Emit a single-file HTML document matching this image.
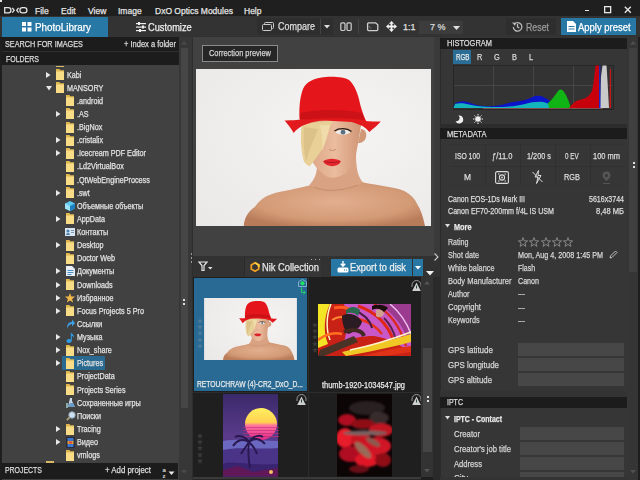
<!DOCTYPE html>
<html><head><meta charset="utf-8">
<style>
*{margin:0;padding:0;box-sizing:border-box}
html,body{width:640px;height:480px;overflow:hidden;background:#1e1e1e;font-family:"Liberation Sans",sans-serif;color:#dcdcdc;font-size:8px}
.a{position:absolute}
.t{position:absolute;white-space:nowrap;line-height:1;transform-origin:0 0;-webkit-text-stroke:0.25px currentColor}
svg{position:absolute;overflow:visible}
</style></head><body>
<div class="a" style="left:0px;top:0px;width:640px;height:16px;background:#1f1f1f;"></div>
<svg style="left:4px;top:6.5px" width="24" height="7" viewBox="0 0 24 7"><g fill="none" stroke="#e6e6e6" stroke-width="1.25"><path d="M0.7 0.7H4.4A2.55 2.55 0 0 1 4.4 5.8H0.7Z"/><path d="M8.3 0.9L10.2 3.25L8.3 5.6M14.6 0.9L12.7 3.25L14.6 5.6"/><rect x="15.9" y="0.7" width="7" height="5.1" rx="2.55"/></g></svg>
<div class="a" style="left:0px;top:0px;width:1.5px;height:1.5px;background:#e0e0e0;"></div>
<div class="t" style="left:35px;top:6.5px;font-size:8.5px;color:#e4e4e4;">File</div>
<div class="t" style="left:61px;top:6.5px;font-size:8.5px;color:#e4e4e4;">Edit</div>
<div class="t" style="left:88px;top:6.5px;font-size:8.5px;color:#e4e4e4;">View</div>
<div class="t" style="left:118px;top:6.5px;font-size:8.5px;color:#e4e4e4;">Image</div>
<div class="t" style="left:155px;top:6.5px;font-size:8.5px;color:#e4e4e4;">DxO Optics Modules</div>
<div class="t" style="left:244px;top:6.5px;font-size:8.5px;color:#e4e4e4;">Help</div>
<div class="a" style="left:585px;top:9.5px;width:4px;height:1.5px;background:#e8e8e8;"></div>
<svg style="left:603.5px;top:5.5px" width="8" height="8"><rect x="0.65" y="0.65" width="6" height="6" fill="none" stroke="#e8e8e8" stroke-width="1.3"/></svg>
<svg style="left:623.5px;top:5.5px" width="8" height="8"><path d="M0.8 0.8L6.8 6.8M6.8 0.8L0.8 6.8" stroke="#e8e8e8" stroke-width="1.3"/></svg>
<div class="a" style="left:0px;top:16px;width:640px;height:21px;background:#333333;"></div>
<div class="a" style="left:2px;top:17px;width:106px;height:20px;background:#2878a5;"></div>
<svg style="left:22px;top:22px" width="10" height="10"><g fill="#fff"><rect x="0" y="0" width="4" height="4"/><rect x="5.5" y="0" width="4" height="4"/><rect x="0" y="5.5" width="4" height="4"/><rect x="5.5" y="5.5" width="4" height="4"/></g></svg>
<div class="t" style="left:35px;top:21.6px;font-size:10.6px;color:#ffffff;transform:scaleX(0.932);">PhotoLibrary</div>
<svg style="left:136px;top:22px" width="10" height="10"><g fill="#eee"><rect x="0" y="1" width="10" height="1.2"/><rect x="0" y="4.5" width="10" height="1.2"/><rect x="0" y="8" width="10" height="1.2"/><rect x="2" y="0" width="2" height="3"/><rect x="6" y="3.5" width="2" height="3"/><rect x="3" y="7" width="2" height="3"/></g></svg>
<div class="t" style="left:147.5px;top:21.6px;font-size:10.6px;color:#f0f0f0;transform:scaleX(0.873);">Customize</div>
<div class="a" style="left:257px;top:18px;width:76px;height:17px;background:#2e2e2e;"></div>
<div class="a" style="left:320px;top:19px;width:1px;height:15px;background:#444;"></div>
<svg style="left:262px;top:22px" width="12" height="9"><g fill="none" stroke="#ccc" stroke-width="1"><rect x="2.5" y="0.5" width="9" height="6" rx="1"/><rect x="0.5" y="2.5" width="9" height="6" rx="1" fill="#2e2e2e"/></g></svg>
<div class="t" style="left:277.5px;top:22.2px;font-size:10.4px;color:#dedede;transform:scaleX(0.865);">Compare</div>
<svg style="left:324px;top:25px" width="6" height="4"><path d="M0 0h6l-3 3.5z" fill="#ddd"/></svg>
<svg style="left:340px;top:22px" width="13" height="10"><g fill="none" stroke="#cfcfcf" stroke-width="1.2"><rect x="0.8" y="0.9" width="4.2" height="7.6" rx="1.2"/><rect x="7" y="0.9" width="4.2" height="7.6" rx="1.2"/></g></svg>
<div class="a" style="left:358px;top:19px;width:1px;height:15px;background:#444;"></div>
<svg style="left:367px;top:22px" width="12" height="10"><g fill="none" stroke="#cfcfcf" stroke-width="1.3"><path d="M1.6 0.8h7l2.2 2v4.8a1 1 0 0 1-1 1h-8.2a1 1 0 0 1-1-1v-5.8a1 1 0 0 1 1-1z"/></g><path d="M2 4l2 2.5" stroke="#888" stroke-width="0.8"/></svg>
<svg style="left:386px;top:21px" width="11" height="11"><g fill="#f2f2f2"><path d="M5.5 0l2.6 2.7h-1.7v1.9h1.9v-1.7l2.7 2.6-2.7 2.6v-1.7h-1.9v1.9h1.7l-2.6 2.7-2.6-2.7h1.7v-1.9h-1.9v1.7l-2.7-2.6 2.7-2.6v1.7h1.9v-1.9h-1.7z"/></g></svg>
<div class="t" style="left:403px;top:23px;font-size:9px;color:#e0e0e0;">1:1</div>
<div class="a" style="left:419px;top:21px;width:44px;height:13px;background:#3c3c3c;"></div>
<div class="t" style="left:430px;top:23px;font-size:9px;color:#d8d8d8;">7 %</div>
<svg style="left:453px;top:26px" width="7" height="4"><path d="M0 0h7l-3.5 4z" fill="#e0e0e0"/></svg>
<div class="a" style="left:506px;top:18px;width:50px;height:17px;background:#2e2e2e;"></div>
<svg style="left:512px;top:21px" width="11" height="11"><g fill="none" stroke="#bbb" stroke-width="1.3"><path d="M2.2 3.2A4.3 4.3 0 1 1 1.3 6"/><path d="M5.5 3v2.8l1.8 1.2"/></g><path d="M0 1.5l3.8 0.2-0.8 3.4z" fill="#bbb"/></svg>
<div class="t" style="left:526px;top:22.8px;font-size:10px;color:#9a9a9a;transform:scaleX(0.88);">Reset</div>
<div class="a" style="left:561px;top:18px;width:75px;height:17px;background:#2878a5;"></div>
<svg style="left:567px;top:21px" width="9" height="11"><path d="M0 0h6l3 3v8h-9z" fill="#fff"/><g fill="#2878a5"><rect x="1.5" y="5" width="6" height="1"/><rect x="1.5" y="7.5" width="6" height="1"/></g></svg>
<div class="t" style="left:578px;top:22.8px;font-size:10px;color:#ffffff;transform:scaleX(0.946);">Apply preset</div>
<div class="a" style="left:0px;top:37px;width:2px;height:443px;background:#1e1e1e;"></div>
<div class="a" style="left:2px;top:37px;width:177px;height:443px;background:#414141;"></div>
<div class="a" style="left:2px;top:37px;width:177px;height:13.5px;background:#1c1c1c;"></div>
<div class="a" style="left:2px;top:50.5px;width:177px;height:1.5px;background:#2e2e2e;"></div>
<div class="a" style="left:2px;top:52px;width:177px;height:13px;background:#1c1c1c;"></div>
<div class="t" style="left:5px;top:40.3px;font-size:8.7px;color:#dcdcdc;transform:scaleX(0.836);">SEARCH FOR IMAGES</div>
<div class="t" style="left:124px;top:40.3px;font-size:8.7px;color:#dcdcdc;transform:scaleX(0.864);">+ Index a folder</div>
<div class="t" style="left:5.5px;top:54.8px;font-size:8.7px;color:#dcdcdc;transform:scaleX(0.803);">FOLDERS</div>
<div class="a" style="left:2px;top:65px;width:177px;height:398px;overflow:hidden">
<div class="a" style="left:54px;top:0.5px;width:8px;height:1.5px;background:#d8b860"></div>
<svg style="left:44px;top:6.50px" width="5" height="6"><path d="M0 0L4.5 3L0 6z" fill="#e8e8e8"/></svg>
<svg style="left:54px;top:4.00px" width="9" height="11" viewBox="0 0 9 11"><path d="M0 0h3.5l0.8 1.2h3.7v9.8h-8z" fill="#e0b850"/><path d="M0 2.4h7.6l0.4 0.5v8.1h-8z" fill="#f8dc86"/></svg>
<div class="t" style="left:64.5px;top:5.5px;font-size:8.7px;color:#e2e2e2;transform:scaleX(0.83);">Kabi</div>
<svg style="left:43.5px;top:20.63px" width="6" height="5"><path d="M0 0H6L3 4.5z" fill="#e8e8e8"/></svg>
<svg style="left:54px;top:17.13px" width="9" height="11" viewBox="0 0 9 11"><path d="M0 0h3.5l0.8 1.2h3.7v9.8h-8z" fill="#e0b850"/><path d="M0 2.4h7.6l0.4 0.5v8.1h-8z" fill="#f8dc86"/></svg>
<div class="t" style="left:64.5px;top:18.629999999999995px;font-size:8.7px;color:#e2e2e2;transform:scaleX(0.83);">MANSORY</div>
<svg style="left:63.5px;top:30.26px" width="9" height="11" viewBox="0 0 9 11"><path d="M0 0h3.5l0.8 1.2h3.7v9.8h-8z" fill="#e0b850"/><path d="M0 2.4h7.6l0.4 0.5v8.1h-8z" fill="#f8dc86"/></svg>
<div class="t" style="left:75px;top:31.760000000000005px;font-size:8.7px;color:#e2e2e2;transform:scaleX(0.83);">.android</div>
<svg style="left:54px;top:45.89px" width="5" height="6"><path d="M0 0L4.5 3L0 6z" fill="#e8e8e8"/></svg>
<svg style="left:63.5px;top:43.39px" width="9" height="11" viewBox="0 0 9 11"><path d="M0 0h3.5l0.8 1.2h3.7v9.8h-8z" fill="#e0b850"/><path d="M0 2.4h7.6l0.4 0.5v8.1h-8z" fill="#f8dc86"/></svg>
<div class="t" style="left:75px;top:44.89px;font-size:8.7px;color:#e2e2e2;transform:scaleX(0.83);">.AS</div>
<svg style="left:63.5px;top:56.52px" width="9" height="11" viewBox="0 0 9 11"><path d="M0 0h3.5l0.8 1.2h3.7v9.8h-8z" fill="#e0b850"/><path d="M0 2.4h7.6l0.4 0.5v8.1h-8z" fill="#f8dc86"/></svg>
<div class="t" style="left:75px;top:58.02000000000001px;font-size:8.7px;color:#e2e2e2;transform:scaleX(0.83);">.BigNox</div>
<svg style="left:54px;top:72.15px" width="5" height="6"><path d="M0 0L4.5 3L0 6z" fill="#e8e8e8"/></svg>
<svg style="left:63.5px;top:69.65px" width="9" height="11" viewBox="0 0 9 11"><path d="M0 0h3.5l0.8 1.2h3.7v9.8h-8z" fill="#e0b850"/><path d="M0 2.4h7.6l0.4 0.5v8.1h-8z" fill="#f8dc86"/></svg>
<div class="t" style="left:75px;top:71.15px;font-size:8.7px;color:#e2e2e2;transform:scaleX(0.83);">.cristalix</div>
<svg style="left:54px;top:85.28px" width="5" height="6"><path d="M0 0L4.5 3L0 6z" fill="#e8e8e8"/></svg>
<svg style="left:63.5px;top:82.78px" width="9" height="11" viewBox="0 0 9 11"><path d="M0 0h3.5l0.8 1.2h3.7v9.8h-8z" fill="#e0b850"/><path d="M0 2.4h7.6l0.4 0.5v8.1h-8z" fill="#f8dc86"/></svg>
<div class="t" style="left:75px;top:84.28px;font-size:8.7px;color:#e2e2e2;transform:scaleX(0.83);">.Icecream PDF Editor</div>
<svg style="left:63.5px;top:95.91px" width="9" height="11" viewBox="0 0 9 11"><path d="M0 0h3.5l0.8 1.2h3.7v9.8h-8z" fill="#e0b850"/><path d="M0 2.4h7.6l0.4 0.5v8.1h-8z" fill="#f8dc86"/></svg>
<div class="t" style="left:75px;top:97.41000000000003px;font-size:8.7px;color:#e2e2e2;transform:scaleX(0.83);">.Ld2VirtualBox</div>
<svg style="left:63.5px;top:109.04px" width="9" height="11" viewBox="0 0 9 11"><path d="M0 0h3.5l0.8 1.2h3.7v9.8h-8z" fill="#e0b850"/><path d="M0 2.4h7.6l0.4 0.5v8.1h-8z" fill="#f8dc86"/></svg>
<div class="t" style="left:75px;top:110.54000000000002px;font-size:8.7px;color:#e2e2e2;transform:scaleX(0.83);">.QtWebEngineProcess</div>
<svg style="left:54px;top:124.67px" width="5" height="6"><path d="M0 0L4.5 3L0 6z" fill="#e8e8e8"/></svg>
<svg style="left:63.5px;top:122.17px" width="9" height="11" viewBox="0 0 9 11"><path d="M0 0h3.5l0.8 1.2h3.7v9.8h-8z" fill="#e0b850"/><path d="M0 2.4h7.6l0.4 0.5v8.1h-8z" fill="#f8dc86"/></svg>
<div class="t" style="left:75px;top:123.67000000000002px;font-size:8.7px;color:#e2e2e2;transform:scaleX(0.83);">.swt</div>
<svg style="left:62.5px;top:135.80px" width="10" height="10" viewBox="0 0 10 10"><path d="M5 0L10 2.5V7.5L5 10L0 7.5V2.5z" fill="#5cc8f0"/><path d="M5 5L10 2.5V7.5L5 10z" fill="#1e7fc0"/><path d="M5 5L0 2.5V7.5L5 10z" fill="#9fe3fa"/></svg>
<div class="t" style="left:75px;top:136.8px;font-size:8.7px;color:#e2e2e2;transform:scaleX(0.83);">Объемные объекты</div>
<svg style="left:54px;top:150.93px" width="5" height="6"><path d="M0 0L4.5 3L0 6z" fill="#e8e8e8"/></svg>
<svg style="left:63.5px;top:148.43px" width="9" height="11" viewBox="0 0 9 11"><path d="M0 0h3.5l0.8 1.2h3.7v9.8h-8z" fill="#e0b850"/><path d="M0 2.4h7.6l0.4 0.5v8.1h-8z" fill="#f8dc86"/></svg>
<div class="t" style="left:75px;top:149.93px;font-size:8.7px;color:#e2e2e2;transform:scaleX(0.83);">AppData</div>
<svg style="left:62.5px;top:163.06px" width="10" height="8" viewBox="0 0 10 8"><rect x="0" y="0" width="10" height="8" fill="#d7e6f2"/><circle cx="3" cy="3" r="1.5" fill="#4a7fb0"/><path d="M1 7a2 2 0 0 1 4 0z" fill="#4a7fb0"/><rect x="6" y="2" width="3" height="1" fill="#7a9ab8"/><rect x="6" y="4" width="3" height="1" fill="#7a9ab8"/></svg>
<div class="t" style="left:75px;top:163.06px;font-size:8.7px;color:#e2e2e2;transform:scaleX(0.83);">Контакты</div>
<svg style="left:54px;top:177.19px" width="5" height="6"><path d="M0 0L4.5 3L0 6z" fill="#e8e8e8"/></svg>
<svg style="left:63.5px;top:174.69px" width="9" height="11" viewBox="0 0 9 11"><path d="M0 0h3.5l0.8 1.2h3.7v9.8h-8z" fill="#e0b850"/><path d="M0 2.4h7.6l0.4 0.5v8.1h-8z" fill="#f8dc86"/></svg>
<div class="t" style="left:75px;top:176.19px;font-size:8.7px;color:#e2e2e2;transform:scaleX(0.83);">Desktop</div>
<svg style="left:63.5px;top:187.82px" width="9" height="11" viewBox="0 0 9 11"><path d="M0 0h3.5l0.8 1.2h3.7v9.8h-8z" fill="#e0b850"/><path d="M0 2.4h7.6l0.4 0.5v8.1h-8z" fill="#f8dc86"/></svg>
<div class="t" style="left:75px;top:189.32000000000005px;font-size:8.7px;color:#e2e2e2;transform:scaleX(0.83);">Doctor Web</div>
<svg style="left:54px;top:203.45px" width="5" height="6"><path d="M0 0L4.5 3L0 6z" fill="#e8e8e8"/></svg>
<svg style="left:63.5px;top:201.45px" width="9" height="10" viewBox="0 0 9 10"><path d="M0 0h6l3 3v7h-9z" fill="#e8eef5"/><rect x="1.5" y="4" width="6" height="1" fill="#4a90c8"/><rect x="1.5" y="6" width="6" height="1" fill="#4a90c8"/><rect x="1.5" y="8" width="4" height="1" fill="#4a90c8"/></svg>
<div class="t" style="left:75px;top:202.45000000000005px;font-size:8.7px;color:#e2e2e2;transform:scaleX(0.83);">Документы</div>
<svg style="left:54px;top:216.58px" width="5" height="6"><path d="M0 0L4.5 3L0 6z" fill="#e8e8e8"/></svg>
<svg style="left:63.5px;top:214.08px" width="9" height="11" viewBox="0 0 9 11"><path d="M0 0h3.5l0.8 1.2h3.7v9.8h-8z" fill="#e0b850"/><path d="M0 2.4h7.6l0.4 0.5v8.1h-8z" fill="#f8dc86"/></svg>
<div class="t" style="left:75px;top:215.58000000000004px;font-size:8.7px;color:#e2e2e2;transform:scaleX(0.83);">Downloads</div>
<svg style="left:54px;top:229.71px" width="5" height="6"><path d="M0 0L4.5 3L0 6z" fill="#e8e8e8"/></svg>
<svg style="left:62.5px;top:227.71px" width="10" height="10" viewBox="0 0 10 10"><path d="M5 0L6.3 3.5L10 3.6L7.1 5.9L8.1 9.6L5 7.5L1.9 9.6L2.9 5.9L0 3.6L3.7 3.5z" fill="#f2b84a"/></svg>
<div class="t" style="left:75px;top:228.71000000000004px;font-size:8.7px;color:#e2e2e2;transform:scaleX(0.83);">Избранное</div>
<svg style="left:54px;top:242.84px" width="5" height="6"><path d="M0 0L4.5 3L0 6z" fill="#e8e8e8"/></svg>
<svg style="left:63.5px;top:240.34px" width="9" height="11" viewBox="0 0 9 11"><path d="M0 0h3.5l0.8 1.2h3.7v9.8h-8z" fill="#e0b850"/><path d="M0 2.4h7.6l0.4 0.5v8.1h-8z" fill="#f8dc86"/></svg>
<div class="t" style="left:75px;top:241.84000000000003px;font-size:8.7px;color:#e2e2e2;transform:scaleX(0.83);">Focus Projects 5 Pro</div>
<svg style="left:63.5px;top:253.97px" width="9" height="10" viewBox="0 0 9 10"><path d="M1 9.5C1 5 3 3 6 3V0.5L9 4L6 7.5V5C4 5 2.5 6.5 1 9.5z" fill="#3ea0e6"/></svg>
<div class="t" style="left:75px;top:254.97000000000003px;font-size:8.7px;color:#e2e2e2;transform:scaleX(0.83);">Ссылки</div>
<svg style="left:54px;top:269.10px" width="5" height="6"><path d="M0 0L4.5 3L0 6z" fill="#e8e8e8"/></svg>
<svg style="left:63.5px;top:266.60px" width="9" height="11" viewBox="0 0 9 11"><ellipse cx="3" cy="9" rx="2.6" ry="1.9" fill="#2e9be6"/><path d="M4.8 9V0.5C6 2 8.5 3 8 6C7.5 4.5 6.5 3.8 5.8 3.8V9z" fill="#2e9be6"/></svg>
<div class="t" style="left:75px;top:268.1px;font-size:8.7px;color:#e2e2e2;transform:scaleX(0.83);">Музыка</div>
<svg style="left:54px;top:282.23px" width="5" height="6"><path d="M0 0L4.5 3L0 6z" fill="#e8e8e8"/></svg>
<svg style="left:63.5px;top:279.73px" width="9" height="11" viewBox="0 0 9 11"><path d="M0 0h3.5l0.8 1.2h3.7v9.8h-8z" fill="#e0b850"/><path d="M0 2.4h7.6l0.4 0.5v8.1h-8z" fill="#f8dc86"/></svg>
<div class="t" style="left:75px;top:281.23px;font-size:8.7px;color:#e2e2e2;transform:scaleX(0.83);">Nox_share</div>
<div class="a" style="left:60px;top:291.36px;width:43px;height:13.5px;background:#2a6a90"></div>
<svg style="left:54px;top:295.36px" width="5" height="6"><path d="M0 0L4.5 3L0 6z" fill="#e8e8e8"/></svg>
<svg style="left:63.5px;top:292.86px" width="9" height="11" viewBox="0 0 9 11"><path d="M0 0h3.5l0.8 1.2h3.7v9.8h-8z" fill="#e0b850"/><path d="M0 2.4h7.6l0.4 0.5v8.1h-8z" fill="#f8dc86"/></svg>
<div class="t" style="left:75px;top:294.36px;font-size:8.7px;color:#e2e2e2;transform:scaleX(0.83);">Pictures</div>
<svg style="left:63.5px;top:305.99px" width="9" height="11" viewBox="0 0 9 11"><path d="M0 0h3.5l0.8 1.2h3.7v9.8h-8z" fill="#e0b850"/><path d="M0 2.4h7.6l0.4 0.5v8.1h-8z" fill="#f8dc86"/></svg>
<div class="t" style="left:75px;top:307.49px;font-size:8.7px;color:#e2e2e2;transform:scaleX(0.83);">ProjectData</div>
<svg style="left:63.5px;top:319.12px" width="9" height="11" viewBox="0 0 9 11"><path d="M0 0h3.5l0.8 1.2h3.7v9.8h-8z" fill="#e0b850"/><path d="M0 2.4h7.6l0.4 0.5v8.1h-8z" fill="#f8dc86"/></svg>
<div class="t" style="left:75px;top:320.62px;font-size:8.7px;color:#e2e2e2;transform:scaleX(0.83);">Projects Series</div>
<svg style="left:63.5px;top:332.75px" width="9" height="10" viewBox="0 0 9 10"><path d="M4 0h2v3l3 6h-7z" fill="#c7d6e6"/><path d="M2 9l2-4h3l2 4z" fill="#6a9ac8"/><rect x="0" y="5" width="2" height="5" fill="#8aa"/></svg>
<div class="t" style="left:75px;top:333.75px;font-size:8.7px;color:#e2e2e2;transform:scaleX(0.83);">Сохраненные игры</div>
<svg style="left:63.5px;top:345.88px" width="10" height="10" viewBox="0 0 10 10"><circle cx="6" cy="4" r="3.2" fill="#cfe0ee" stroke="#8fa9bd" stroke-width="1"/><path d="M3.8 6.2L0.8 9.2" stroke="#b0a080" stroke-width="1.8"/></svg>
<div class="t" style="left:75px;top:346.88px;font-size:8.7px;color:#e2e2e2;transform:scaleX(0.83);">Поиски</div>
<svg style="left:54px;top:361.01px" width="5" height="6"><path d="M0 0L4.5 3L0 6z" fill="#e8e8e8"/></svg>
<svg style="left:63.5px;top:358.51px" width="9" height="11" viewBox="0 0 9 11"><path d="M0 0h3.5l0.8 1.2h3.7v9.8h-8z" fill="#e0b850"/><path d="M0 2.4h7.6l0.4 0.5v8.1h-8z" fill="#f8dc86"/></svg>
<div class="t" style="left:75px;top:360.01000000000005px;font-size:8.7px;color:#e2e2e2;transform:scaleX(0.83);">Tracing</div>
<svg style="left:54px;top:374.14px" width="5" height="6"><path d="M0 0L4.5 3L0 6z" fill="#e8e8e8"/></svg>
<svg style="left:63.5px;top:371.64px" width="9" height="11" viewBox="0 0 9 11"><rect x="0" y="0" width="9" height="11" fill="#2a2a3a"/><rect x="1.5" y="1" width="6" height="3" fill="#3a78d0"/><rect x="1.5" y="4" width="6" height="3" fill="#e2a030"/><rect x="1.5" y="7" width="6" height="3" fill="#3a78d0"/><rect x="3" y="4.5" width="3" height="2" fill="#e04040"/></svg>
<div class="t" style="left:75px;top:373.14000000000004px;font-size:8.7px;color:#e2e2e2;transform:scaleX(0.83);">Видео</div>
<svg style="left:63.5px;top:384.77px" width="9" height="11" viewBox="0 0 9 11"><path d="M0 0h3.5l0.8 1.2h3.7v9.8h-8z" fill="#e0b850"/><path d="M0 2.4h7.6l0.4 0.5v8.1h-8z" fill="#f8dc86"/></svg>
<div class="t" style="left:75px;top:386.27000000000004px;font-size:8.7px;color:#e2e2e2;transform:scaleX(0.83);">vmlogs</div>
</div>
<div class="a" style="left:2px;top:463px;width:176px;height:16px;background:#1c1c1c;"></div>
<div class="t" style="left:5px;top:466px;font-size:8.7px;color:#dcdcdc;transform:scaleX(0.797);">PROJECTS</div>
<div class="t" style="left:105px;top:466px;font-size:8.7px;color:#dcdcdc;transform:scaleX(0.902);">+ Add project</div>
<svg style="left:162px;top:465.5px" width="14" height="13"><text x="0.5" y="5.5" font-size="6" font-weight="bold" fill="#ddd" font-family="Liberation Sans">a</text><text x="0.5" y="11.5" font-size="6" font-weight="bold" fill="#ddd" font-family="Liberation Sans">z</text><path d="M6.5 5.5h6l-3 3.5z" fill="#e8e8e8"/></svg>
<div class="a" style="left:46px;top:461px;width:8px;height:2px;background:#d8b860;"></div>
<div class="a" style="left:179px;top:37px;width:14px;height:443px;background:#373737;"></div>
<div class="a" style="left:180.5px;top:48px;width:7px;height:360px;background:#464646;"></div>
<svg style="left:181px;top:41px" width="6" height="4"><path d="M0 3.5L3 0L6 3.5z" fill="#4a4a4a"/></svg>
<svg style="left:181px;top:470px" width="6" height="4"><path d="M0 0L3 3.5L6 0z" fill="#4a4a4a"/></svg>
<div class="a" style="left:192px;top:37px;width:1px;height:443px;background:#2e2e2e;"></div>
<div class="a" style="left:193px;top:37px;width:247px;height:219px;background:#414141;"></div>
<div class="a" style="left:193px;top:35.5px;width:247px;height:1.5px;background:#303030;"></div>
<div class="a" style="left:433.5px;top:37px;width:6.5px;height:220px;background:#3a3a3a;"></div>
<div class="a" style="left:202px;top:45px;width:76px;height:17px;background:#262626;border:1px solid #8a8a8a"></div>
<div class="t" style="left:209px;top:49.3px;font-size:8.8px;color:#d4d4d4;transform:scaleX(0.845);">Correction preview</div>
<svg style="left:196px;top:69px" width="235" height="157" viewBox="0 0 235 157">
<defs>
<radialGradient id="bg" cx="0.62" cy="0.4" r="0.8"><stop offset="0" stop-color="#f6f3f3"/><stop offset="1" stop-color="#ebe8e8"/></radialGradient>
<radialGradient id="skin" cx="0.5" cy="0.45" r="0.6"><stop offset="0" stop-color="#e2ae8e"/><stop offset="0.7" stop-color="#d39a76"/><stop offset="1" stop-color="#b97c5a"/></radialGradient>
<linearGradient id="face" x1="0" y1="0" x2="1" y2="0"><stop offset="0" stop-color="#d8a080"/><stop offset="0.55" stop-color="#ebbc9e"/><stop offset="1" stop-color="#cf9474"/></linearGradient>
</defs>
<rect width="235" height="157" fill="url(#bg)"/>
<path d="M47.8 157 C48 150 52 142 58.75 137.9 C63 132 67 129 71 127 C76 125 82 123 86.9 122.3 C98 120 108 118 115 116 L140 120 L165 112.9 C175 115 183 116 190 117.6 C198 119 204 120 208.75 122.3 C215 126 219 130 221 134.75 C225 141 227 148 229 157 Z" fill="url(#skin)"/>
<path d="M121 96 C121 104 119 110 113 116.5 C122 120 132 123 140 123 C148 122 158 118 167 113.5 C162 108 160 100 160 84 L150 90 Z" fill="#d9a282"/>
<path d="M118 118 C126 121 134 122 140 121 C146 121 154 119 162 116" stroke="#c08868" stroke-width="0.8" fill="none"/>
<path d="M106 50 C108 72 112 88 120 98 C126 105 131 108.7 136.7 108.7 C142 108.7 147 106 150.5 104 C155 98 158 92 159.6 88 C161 80 163 70 166 50 Z" fill="url(#face)"/>
<path d="M165 60 C169 60 171 64 170 68 C169 72 166 74 162 74 Z" fill="#d09876"/>
<path d="M127 92.3 C131 88.8 141 88.8 145 92.3 C142 98.8 130.5 98.8 127 92.3 Z" fill="#e3262e"/>
<path d="M128.5 92.6 C133 93.8 140 93.8 143.7 92.6" stroke="#9a1018" stroke-width="0.7" fill="none"/>
<path d="M139.5 63 C143 60 151 60 154.5 63 C151 66.5 143 66.5 139.5 63Z" fill="#eef0f0"/><circle cx="147" cy="63.2" r="2.4" fill="#5a7080"/>
<path d="M138.5 62 C143 58.8 151 58.8 155.5 62.5" stroke="#2a1c18" stroke-width="1.4" fill="none"/>
<path d="M133 80 C135 82 138 82 140 80" stroke="#b8805e" stroke-width="0.8" fill="none"/>
<path d="M105.8 55 C104 68 105 82 108 92.7 C110 95 112 97 113.8 97.2 C118 92 121 88 124 83.5 C127 79 128.7 75 129.8 69.7 C132 64 134 58 136.7 51.4 Z" fill="#e8d096"/>
<path d="M108 58 C107 72 108 84 110 92 C113 82 117 72 122 60Z" fill="#dcc288"/>
<path d="M124 56 C126 66 127 74 126 82 C129 74 132 66 134 56Z" fill="#f0dcaa"/>
<path d="M103.5 50.3 C103 38 104 28 107 20 C110 13 118 8.5 129.8 7.9 C140 7.3 149 8.5 153 11 C158 15 162 24 164.2 35.4 C166 42 168 48 171 53.7 Z" fill="#e5161b"/>
<path d="M88.6 51.4 C94 51.5 100 51 107 50.5 C120 48.5 130 47.5 137 47.5 C150 48 160 50 168 52 C175 52.5 180 52.5 184.8 52.6 C181 57 177 60 173.4 62.9 C171 60 168 58 166.5 57 C156 52 146 50 137 50.5 C125 51 114 53 105.8 57.1 C103 59 100 61 97.7 64 C95 59 91.5 55 88.6 51.4 Z" fill="#e31a1d"/>
<path d="M104.5 44 C120 40 150 40 166 44 L169 51 C150 48.5 125 48.5 104 51 Z" fill="#cc1216"/>
</svg>
<div class="a" style="left:193px;top:256px;width:247px;height:21px;background:#323232;"></div>
<div class="a" style="left:244px;top:257px;width:1px;height:19px;background:#2a2a2a;"></div>
<div class="a" style="left:190.5px;top:253px;width:1.5px;height:1.5px;background:#9a9a9a;"></div>
<div class="a" style="left:190.5px;top:257px;width:1.5px;height:1.5px;background:#9a9a9a;"></div>
<div class="a" style="left:190.5px;top:261px;width:1.5px;height:1.5px;background:#9a9a9a;"></div>
<svg style="left:199px;top:262px" width="14" height="9"><path d="M0 0H8L5 3.5V8.5H3V3.5z" fill="none" stroke="#e6e6e6" stroke-width="1.2"/><path d="M9 5h4.5l-2.25 2.5z" fill="#e6e6e6"/></svg>
<div class="a" style="left:245px;top:258px;width:76px;height:19px;background:#363636;"></div>
<svg style="left:250px;top:262px" width="10" height="10" viewBox="0 0 10 10"><path d="M5 0.8L8.7 2.9V7.1L5 9.2L1.3 7.1V2.9Z" fill="none" stroke="#f0a020" stroke-width="1.8"/><path d="M5 0.8L8.7 2.9V5" fill="none" stroke="#ffd040" stroke-width="1.8"/></svg>
<div class="t" style="left:262px;top:262.8px;font-size:10.4px;color:#e6e6e6;transform:scaleX(0.897);">Nik Collection</div>
<div class="a" style="left:310.5px;top:259px;width:1.3px;height:1.3px;background:#aaa;"></div>
<div class="a" style="left:314.5px;top:259px;width:1.3px;height:1.3px;background:#aaa;"></div>
<div class="a" style="left:318.5px;top:259px;width:1.3px;height:1.3px;background:#aaa;"></div>
<div class="a" style="left:330.5px;top:258.5px;width:81px;height:17.5px;background:#2878a5;"></div>
<div class="a" style="left:412.5px;top:258.5px;width:10.5px;height:17.5px;background:#2878a5;"></div>
<svg style="left:337px;top:261px" width="12" height="12" viewBox="0 0 12 12"><path d="M6 0v5M3.8 2.8L6 5.2L8.2 2.8" stroke="#fff" stroke-width="1.4" fill="none"/><rect x="0.5" y="6.5" width="11" height="5" rx="1.5" fill="#fff"/><rect x="7" y="8.5" width="1" height="1" fill="#2878a5"/><rect x="9" y="8.5" width="1" height="1" fill="#2878a5"/></svg>
<div class="t" style="left:350px;top:263.2px;font-size:10.4px;color:#f0f0f0;transform:scaleX(0.889);">Export to disk</div>
<svg style="left:414.5px;top:266px" width="6" height="4"><path d="M0 0h6l-3 3.5z" fill="#fff"/></svg>
<svg style="left:426px;top:271px" width="8" height="5"><path d="M0 0h8l-4 4.5z" fill="#f0f0f0"/></svg>
<svg style="left:434px;top:253px" width="5" height="8"><path d="M0.5 0.5L4 4L0.5 7.5" stroke="#ccc" stroke-width="1.1" fill="none"/></svg>
<div class="a" style="left:193px;top:277px;width:228px;height:203px;background:#1f1f1f;"></div>
<div class="a" style="left:307.5px;top:277px;width:1px;height:203px;background:#2c2c2c;"></div>
<div class="a" style="left:193px;top:391.5px;width:228px;height:1px;background:#2c2c2c;"></div>
<div class="a" style="left:194px;top:278px;width:113px;height:113px;background:#286a93;"></div>
<svg style="left:204px;top:298px" width="93" height="62" viewBox="0 0 235 157">
<defs>
<radialGradient id="bg2" cx="0.62" cy="0.4" r="0.8"><stop offset="0" stop-color="#f6f3f3"/><stop offset="1" stop-color="#ebe8e8"/></radialGradient>
<radialGradient id="skin2" cx="0.5" cy="0.45" r="0.6"><stop offset="0" stop-color="#e2ae8e"/><stop offset="0.7" stop-color="#d39a76"/><stop offset="1" stop-color="#b97c5a"/></radialGradient>
<linearGradient id="face" x1="0" y1="0" x2="1" y2="0"><stop offset="0" stop-color="#d8a080"/><stop offset="0.55" stop-color="#ebbc9e"/><stop offset="1" stop-color="#cf9474"/></linearGradient>
</defs>
<rect width="235" height="157" fill="url(#bg2)"/>
<path d="M47.8 157 C48 150 52 142 58.75 137.9 C63 132 67 129 71 127 C76 125 82 123 86.9 122.3 C98 120 108 118 115 116 L140 120 L165 112.9 C175 115 183 116 190 117.6 C198 119 204 120 208.75 122.3 C215 126 219 130 221 134.75 C225 141 227 148 229 157 Z" fill="url(#skin2)"/>
<path d="M121 96 C121 104 119 110 113 116.5 C122 120 132 123 140 123 C148 122 158 118 167 113.5 C162 108 160 100 160 84 L150 90 Z" fill="#d9a282"/>
<path d="M118 118 C126 121 134 122 140 121 C146 121 154 119 162 116" stroke="#c08868" stroke-width="0.8" fill="none"/>
<path d="M106 50 C108 72 112 88 120 98 C126 105 131 108.7 136.7 108.7 C142 108.7 147 106 150.5 104 C155 98 158 92 159.6 88 C161 80 163 70 166 50 Z" fill="url(#face)"/>
<path d="M165 60 C169 60 171 64 170 68 C169 72 166 74 162 74 Z" fill="#d09876"/>
<path d="M127 92.3 C131 88.8 141 88.8 145 92.3 C142 98.8 130.5 98.8 127 92.3 Z" fill="#e3262e"/>
<path d="M128.5 92.6 C133 93.8 140 93.8 143.7 92.6" stroke="#9a1018" stroke-width="0.7" fill="none"/>
<path d="M139.5 63 C143 60 151 60 154.5 63 C151 66.5 143 66.5 139.5 63Z" fill="#eef0f0"/><circle cx="147" cy="63.2" r="2.4" fill="#5a7080"/>
<path d="M138.5 62 C143 58.8 151 58.8 155.5 62.5" stroke="#2a1c18" stroke-width="1.4" fill="none"/>
<path d="M133 80 C135 82 138 82 140 80" stroke="#b8805e" stroke-width="0.8" fill="none"/>
<path d="M105.8 55 C104 68 105 82 108 92.7 C110 95 112 97 113.8 97.2 C118 92 121 88 124 83.5 C127 79 128.7 75 129.8 69.7 C132 64 134 58 136.7 51.4 Z" fill="#e8d096"/>
<path d="M108 58 C107 72 108 84 110 92 C113 82 117 72 122 60Z" fill="#dcc288"/>
<path d="M124 56 C126 66 127 74 126 82 C129 74 132 66 134 56Z" fill="#f0dcaa"/>
<path d="M103.5 50.3 C103 38 104 28 107 20 C110 13 118 8.5 129.8 7.9 C140 7.3 149 8.5 153 11 C158 15 162 24 164.2 35.4 C166 42 168 48 171 53.7 Z" fill="#e5161b"/>
<path d="M88.6 51.4 C94 51.5 100 51 107 50.5 C120 48.5 130 47.5 137 47.5 C150 48 160 50 168 52 C175 52.5 180 52.5 184.8 52.6 C181 57 177 60 173.4 62.9 C171 60 168 58 166.5 57 C156 52 146 50 137 50.5 C125 51 114 53 105.8 57.1 C103 59 100 61 97.7 64 C95 59 91.5 55 88.6 51.4 Z" fill="#e31a1d"/>
<path d="M104.5 44 C120 40 150 40 166 44 L169 51 C150 48.5 125 48.5 104 51 Z" fill="#cc1216"/>
</svg>
<svg style="left:196.5px;top:318.0px" width="6" height="6" viewBox="0 0 10 10"><path d="M5 0L6.3 3.5L10 3.6L7.1 5.9L8.1 9.6L5 7.5L1.9 9.6L2.9 5.9L0 3.6L3.7 3.5z" fill="#4a7a9a"/></svg>
<svg style="left:196.5px;top:324.2px" width="6" height="6" viewBox="0 0 10 10"><path d="M5 0L6.3 3.5L10 3.6L7.1 5.9L8.1 9.6L5 7.5L1.9 9.6L2.9 5.9L0 3.6L3.7 3.5z" fill="#4a7a9a"/></svg>
<svg style="left:196.5px;top:330.4px" width="6" height="6" viewBox="0 0 10 10"><path d="M5 0L6.3 3.5L10 3.6L7.1 5.9L8.1 9.6L5 7.5L1.9 9.6L2.9 5.9L0 3.6L3.7 3.5z" fill="#4a7a9a"/></svg>
<svg style="left:196.5px;top:336.6px" width="6" height="6" viewBox="0 0 10 10"><path d="M5 0L6.3 3.5L10 3.6L7.1 5.9L8.1 9.6L5 7.5L1.9 9.6L2.9 5.9L0 3.6L3.7 3.5z" fill="#4a7a9a"/></svg>
<svg style="left:196.5px;top:342.8px" width="6" height="6" viewBox="0 0 10 10"><path d="M5 0L6.3 3.5L10 3.6L7.1 5.9L8.1 9.6L5 7.5L1.9 9.6L2.9 5.9L0 3.6L3.7 3.5z" fill="#4a7a9a"/></svg>
<svg style="left:311.5px;top:322.0px" width="6" height="6" viewBox="0 0 10 10"><path d="M5 0L6.3 3.5L10 3.6L7.1 5.9L8.1 9.6L5 7.5L1.9 9.6L2.9 5.9L0 3.6L3.7 3.5z" fill="#3a3a3a"/></svg>
<svg style="left:311.5px;top:328.2px" width="6" height="6" viewBox="0 0 10 10"><path d="M5 0L6.3 3.5L10 3.6L7.1 5.9L8.1 9.6L5 7.5L1.9 9.6L2.9 5.9L0 3.6L3.7 3.5z" fill="#3a3a3a"/></svg>
<svg style="left:311.5px;top:334.4px" width="6" height="6" viewBox="0 0 10 10"><path d="M5 0L6.3 3.5L10 3.6L7.1 5.9L8.1 9.6L5 7.5L1.9 9.6L2.9 5.9L0 3.6L3.7 3.5z" fill="#3a3a3a"/></svg>
<svg style="left:311.5px;top:340.6px" width="6" height="6" viewBox="0 0 10 10"><path d="M5 0L6.3 3.5L10 3.6L7.1 5.9L8.1 9.6L5 7.5L1.9 9.6L2.9 5.9L0 3.6L3.7 3.5z" fill="#3a3a3a"/></svg>
<svg style="left:311.5px;top:346.8px" width="6" height="6" viewBox="0 0 10 10"><path d="M5 0L6.3 3.5L10 3.6L7.1 5.9L8.1 9.6L5 7.5L1.9 9.6L2.9 5.9L0 3.6L3.7 3.5z" fill="#3a3a3a"/></svg>
<div class="t" style="left:197px;top:379.8px;font-size:8.8px;color:#e8e8e8;transform:scaleX(0.766);">RETOUCHRAW (4)-CR2_DxO_D...</div>
<div class="t" style="left:322px;top:380.8px;font-size:8.8px;color:#e8e8e8;transform:scaleX(0.844);">thumb-1920-1034547.jpg</div>
<svg style="left:298px;top:279.3px" width="10" height="16" viewBox="0 0 10 16"><path d="M4.5 0.5L8.5 2.8V7.5H0.5V2.8Z" fill="none" stroke="#8ab8d0" stroke-width="0.9"/><circle cx="4.5" cy="4.2" r="2" fill="#20e860"/><path d="M3.5 8.5v5h3.5M5.5 11.8l1.8 1.7-1.8 1.7" stroke="#20d860" stroke-width="1" fill="none"/></svg>
<svg style="left:411px;top:279.5px" width="11" height="12" viewBox="0 0 11 12"><path d="M1 7V5A4.5 4.5 0 0 1 10 5V7" fill="none" stroke="#9a9a9a" stroke-width="1"/><path d="M5.5 2.5L9.8 11H1.2Z" fill="#cfcfcf"/><rect x="5" y="5.5" width="1" height="3" fill="#2a4a40"/></svg>
<svg style="left:296px;top:393.5px" width="11" height="12" viewBox="0 0 11 12"><path d="M1 7V5A4.5 4.5 0 0 1 10 5V7" fill="none" stroke="#9a9a9a" stroke-width="1"/><path d="M5.5 2.5L9.8 11H1.2Z" fill="#cfcfcf"/><rect x="5" y="5.5" width="1" height="3" fill="#2a4a40"/></svg>
<svg style="left:411px;top:393.5px" width="11" height="12" viewBox="0 0 11 12"><path d="M1 7V5A4.5 4.5 0 0 1 10 5V7" fill="none" stroke="#9a9a9a" stroke-width="1"/><path d="M5.5 2.5L9.8 11H1.2Z" fill="#cfcfcf"/><rect x="5" y="5.5" width="1" height="3" fill="#2a4a40"/></svg>
<svg style="left:318px;top:303.5px" width="93" height="52" viewBox="0 0 93 52">
<defs><filter id="ab" x="-0.1" y="-0.1" width="1.2" height="1.2"><feGaussianBlur stdDeviation="0.45"/></filter><clipPath id="ac"><rect width="93" height="52"/></clipPath></defs>
<g clip-path="url(#ac)"><g filter="url(#ab)">
<rect width="93" height="52" fill="#c82014"/>
<path d="M26 0H93V48C80 40 70 34 56 32C44 32 34 34 26 38C30 24 30 10 26 0z" fill="#c858c8"/>
<path d="M60 0C74 8 84 20 90 36L93 36V0z" fill="#9a3a90"/>
<path d="M40 2C58 8 70 20 76 38" stroke="#e02818" stroke-width="3" fill="none"/>
<path d="M56 0C72 8 82 22 88 42" stroke="#d82a20" stroke-width="2.5" fill="none"/>
<path d="M72 0C84 10 90 22 93 30" stroke="#f0c0f0" stroke-width="1.5" fill="none"/>
<path d="M30 14C44 14 56 20 64 30" stroke="#e83018" stroke-width="2.5" fill="none"/>
<path d="M36 6C46 10 52 16 54 24" stroke="#4a1a40" stroke-width="2" fill="none"/>
<path d="M66 14C72 20 76 28 78 36" stroke="#5a2050" stroke-width="2" fill="none"/>
<path d="M0 0H12C6 12 5 28 10 40L0 44z" fill="#f4e428"/>
<path d="M13 0C8 12 8 26 12 36" stroke="#fff8c0" stroke-width="1.5" fill="none"/>
<path d="M16 4C24 2 30 3 36 8" stroke="#ff5a20" stroke-width="3" fill="none"/>
<path d="M14 16C20 12 26 12 32 16" stroke="#ff8a30" stroke-width="2" fill="none"/>
<path d="M24 12C30 8 40 10 44 18C42 24 36 28 30 30C26 26 24 18 24 12z" fill="#2a1a20"/>
<path d="M28 6C32 2 38 2 42 6L40 12C36 8 32 8 28 10z" fill="#2a6a50"/>
<path d="M58 6C62 4 66 6 66 10C64 14 60 14 58 12z" fill="#d0a090"/>
<path d="M54 2C58 0 66 0 70 4L66 8C62 4 58 4 54 6z" fill="#1a0c10"/>
<path d="M26 28C34 24 44 26 46 32" stroke="#402a20" stroke-width="4" fill="none"/>
<path d="M2 46L36 32L40 38L6 52H0z" fill="#4a3028"/>
<path d="M24 48C40 44 60 40 93 30V38C70 44 50 48 28 52z" fill="#f0c828"/>
<path d="M32 46C52 42 72 36 93 28" stroke="#fff6d0" stroke-width="1.5" fill="none"/>
<path d="M44 52C60 48 76 44 93 42V48C80 50 70 52 60 52z" fill="#e03018"/>
<path d="M0 36C8 30 16 28 24 30" stroke="#ff7020" stroke-width="2.5" fill="none"/>
</g></g>
</svg>
<svg style="left:223px;top:394px" width="55" height="82.5" viewBox="0 0 55 82.5">
<defs><linearGradient id="sk" x1="0" y1="0" x2="0" y2="1"><stop offset="0" stop-color="#3a2a6a"/><stop offset="0.5" stop-color="#5a3a8a"/><stop offset="1" stop-color="#4a3a90"/></linearGradient>
<linearGradient id="sun" x1="0" y1="0" x2="0" y2="1"><stop offset="0" stop-color="#fff060"/><stop offset="0.45" stop-color="#ffd050"/><stop offset="0.55" stop-color="#ff70a0"/><stop offset="1" stop-color="#e02888"/></linearGradient></defs>
<rect width="55" height="82.5" fill="url(#sk)"/>
<circle cx="38" cy="30" r="16" fill="url(#sun)"/>
<g fill="#c03078" opacity="0.8"><rect x="20" y="33" width="36" height="0.8"/><rect x="20" y="36" width="36" height="0.8"/><rect x="20" y="39" width="36" height="0.9"/><rect x="20" y="42" width="36" height="1"/></g>
<path d="M0 47C12 45 30 46 55 47V58H0z" fill="#6a68c0"/>
<path d="M0 56C15 52 35 56 55 54V82.5H0z" fill="#4a3488"/>
<path d="M0 70C10 66 25 72 55 70V82.5H0z" fill="#3a2470"/>
<path d="M26 48C25 56 25 64 27 74" stroke="#2a1850" stroke-width="1.8" fill="none"/>
<path d="M26 48C20 44 14 46 10 52M26 48C32 43 38 45 42 50M26 48C22 42 16 41 12 43M26 48C31 41 37 41 40 43M26 48C24 52 20 56 18 60M26 48C30 52 33 56 34 60" stroke="#2a1850" stroke-width="2" fill="none"/>
<path d="M0 76L15 72L30 78L55 74V82.5H0z" fill="#601858"/>
<circle cx="48" cy="78" r="2" fill="#f0c060"/>
</svg>
<svg style="left:337px;top:394px" width="55" height="82.5" viewBox="0 0 55 82.5">
<defs><filter id="bl" x="-0.3" y="-0.3" width="1.6" height="1.6"><feGaussianBlur stdDeviation="1.1"/></filter><clipPath id="rc"><rect width="55" height="82.5"/></clipPath></defs>
<rect width="55" height="82.5" fill="#0c0506"/>
<g clip-path="url(#rc)"><g filter="url(#bl)">
<ellipse cx="30" cy="14" rx="18" ry="7" fill="#3a3232" opacity="0.6"/>
<ellipse cx="42" cy="24" rx="10" ry="6" fill="#4a3a3a" opacity="0.7"/>
<ellipse cx="10" cy="26" rx="9" ry="6" fill="#b01020"/>
<ellipse cx="26" cy="30" rx="12" ry="5" fill="#901018"/>
<ellipse cx="44" cy="36" rx="12" ry="7" fill="#c01422"/>
<ellipse cx="8" cy="44" rx="9" ry="10" fill="#e81a2a"/>
<ellipse cx="24" cy="46" rx="10" ry="8" fill="#c81424"/>
<ellipse cx="40" cy="52" rx="14" ry="9" fill="#d01828"/>
<ellipse cx="14" cy="60" rx="12" ry="8" fill="#b01020"/>
<ellipse cx="30" cy="66" rx="12" ry="7" fill="#e01828"/>
<ellipse cx="46" cy="66" rx="8" ry="7" fill="#901018"/>
<ellipse cx="22" cy="75" rx="10" ry="4" fill="#6a0c14"/>
<ellipse cx="28" cy="39" rx="22" ry="2.5" fill="#7a6060"/>
<ellipse cx="26" cy="56" rx="4" ry="11" fill="#9a6a58" transform="rotate(-45 26 56)"/>
<ellipse cx="36" cy="48" rx="3" ry="8" fill="#8a5a50" transform="rotate(-60 36 48)"/>
</g></g>
</svg>
<svg style="left:196.5px;top:433.0px" width="6" height="6" viewBox="0 0 10 10"><path d="M5 0L6.3 3.5L10 3.6L7.1 5.9L8.1 9.6L5 7.5L1.9 9.6L2.9 5.9L0 3.6L3.7 3.5z" fill="#3a3a3a"/></svg>
<svg style="left:196.5px;top:439.2px" width="6" height="6" viewBox="0 0 10 10"><path d="M5 0L6.3 3.5L10 3.6L7.1 5.9L8.1 9.6L5 7.5L1.9 9.6L2.9 5.9L0 3.6L3.7 3.5z" fill="#3a3a3a"/></svg>
<svg style="left:196.5px;top:445.4px" width="6" height="6" viewBox="0 0 10 10"><path d="M5 0L6.3 3.5L10 3.6L7.1 5.9L8.1 9.6L5 7.5L1.9 9.6L2.9 5.9L0 3.6L3.7 3.5z" fill="#3a3a3a"/></svg>
<svg style="left:196.5px;top:451.6px" width="6" height="6" viewBox="0 0 10 10"><path d="M5 0L6.3 3.5L10 3.6L7.1 5.9L8.1 9.6L5 7.5L1.9 9.6L2.9 5.9L0 3.6L3.7 3.5z" fill="#3a3a3a"/></svg>
<svg style="left:196.5px;top:457.8px" width="6" height="6" viewBox="0 0 10 10"><path d="M5 0L6.3 3.5L10 3.6L7.1 5.9L8.1 9.6L5 7.5L1.9 9.6L2.9 5.9L0 3.6L3.7 3.5z" fill="#3a3a3a"/></svg>
<div class="a" style="left:193px;top:477px;width:228px;height:1.5px;background:#3a3a3a;"></div>
<div class="a" style="left:193px;top:478.5px;width:228px;height:1.5px;background:#262626;"></div>
<div class="a" style="left:183.3px;top:299px;width:2px;height:2px;background:#e0e0e0;"></div>
<div class="a" style="left:183.3px;top:303px;width:2px;height:2px;background:#e0e0e0;"></div>
<div class="a" style="left:421px;top:277px;width:12px;height:200px;background:#333333;"></div>
<div class="a" style="left:423px;top:348px;width:9px;height:104px;background:#454545;"></div>
<svg style="left:424px;top:281px" width="6" height="4"><path d="M0 3.5L3 0L6 3.5z" fill="#555"/></svg>
<svg style="left:424px;top:469px" width="6" height="4"><path d="M0 0L3 3.5L6 0z" fill="#555"/></svg>
<div class="a" style="left:426.5px;top:396px;width:2px;height:2px;background:#e0e0e0;"></div>
<div class="a" style="left:426.5px;top:400px;width:2px;height:2px;background:#e0e0e0;"></div>
<div class="a" style="left:433px;top:277px;width:7px;height:203px;background:#2a2a2a;"></div>
<div class="a" style="left:440px;top:37px;width:200px;height:443px;background:#1e1e1e;"></div>
<div class="a" style="left:440px;top:37px;width:188px;height:443px;background:#363636;"></div>
<div class="a" style="left:440px;top:37px;width:1px;height:443px;background:#2a2a2a;"></div>
<div class="a" style="left:440px;top:38px;width:187px;height:11px;background:#1c1c1c;"></div>
<div class="t" style="left:447px;top:39.4px;font-size:8.7px;color:#dcdcdc;transform:scaleX(0.857);">HISTOGRAM</div>
<div class="a" style="left:453px;top:50px;width:18px;height:14px;background:#2a6e97;"></div>
<div class="t" style="left:455.5px;top:53.5px;font-size:8.2px;color:#e8e8e8;transform:scaleX(0.76);">RGB</div>
<div class="t" style="left:477px;top:53.5px;font-size:8.2px;color:#d8d8d8;transform:scaleX(0.9);">R</div>
<div class="t" style="left:494px;top:53.5px;font-size:8.2px;color:#d8d8d8;transform:scaleX(0.9);">G</div>
<div class="t" style="left:512px;top:53.5px;font-size:8.2px;color:#d8d8d8;transform:scaleX(0.9);">B</div>
<div class="t" style="left:529px;top:53.5px;font-size:8.2px;color:#d8d8d8;transform:scaleX(0.9);">L</div>
<svg style="left:453px;top:65px" width="161" height="45" viewBox="0 0 161 45">
<rect x="0" y="0" width="161" height="45" fill="#333333"/>
<g stroke="#4a4a4a" stroke-width="0.8"><path d="M40.5 0V45M80.5 0V45M120.5 0V45M0 20.5H161"/></g>
<rect x="0.5" y="0.5" width="160" height="44" fill="none" stroke="#262626"/>
<path d="M0.5 43 L1.5 39 C4 37 8 36 12 36.5 C16 37 20 39.5 26 40.5 C34 41.5 40 41.5 48 40 C54 38.5 58 37 64 36.5 C70 36 76 34 82 31 C86 30 90 31 94 34 C98 36 102 39 106 42 L106 43 Z" fill="#0a14c8"/>
<path d="M0.5 43 L2 39 C5 38 10 38 16 39.5 C22 41 30 42 40 42 C55 42 65 41 72 39 C78 37.5 84 36.5 90 37 C94 37.5 98 40 102 43 Z" fill="#14b4bc"/>
<path d="M95 38 C99 35 102 30 105 26 C107 24 109 24 111 27 C114 31 116 37 118 43 L96 43 Z" fill="#10b414"/>
<path d="M116 43 C119 39 122 36 126 35 C132 34 136 32 139 26 C141 18 141.5 8 142.5 0.5 L146 0.5 L146.5 43 Z" fill="#c8000c"/>
<path d="M147 43 L148 12 L149.5 0.5 L153.5 0.5 L154.5 16 L156 43 Z" fill="#cacaca"/>
<path d="M146 43 L146.3 0.5 L147.3 0.5 L147.5 43Z" fill="#1a2ad8"/>
<path d="M156.5 43 L156.8 4 L158 4 L158 43Z" fill="#c01818"/>
<path d="M30 43.5 H150" stroke="#d06a6a" stroke-width="0.7" opacity="0.7"/>
</svg>
<svg style="left:455px;top:114.5px" width="9" height="9" viewBox="0 0 9 9"><path d="M5.5 0.5A4 4 0 1 0 8.5 6A3.2 3.2 0 0 1 5.5 0.5Z" fill="#eee" transform="translate(9 0) scale(-1 1)"/></svg>
<svg style="left:472.5px;top:113.5px" width="10" height="10" viewBox="0 0 10 10"><circle cx="5" cy="5" r="2.8" fill="#eee"/><g stroke="#eee" stroke-width="1"><path d="M5 0V1.5M5 8.5V10M0 5H1.5M8.5 5H10M1.5 1.5L2.5 2.5M7.5 7.5L8.5 8.5M1.5 8.5L2.5 7.5M7.5 2.5L8.5 1.5"/></g></svg>
<div class="a" style="left:440px;top:124px;width:187px;height:4px;background:#2c2c2c;"></div>
<div class="a" style="left:440px;top:128px;width:187px;height:10.7px;background:#1c1c1c;"></div>
<div class="t" style="left:447px;top:129.5px;font-size:8.7px;color:#dcdcdc;transform:scaleX(0.869);">METADATA</div>
<div class="a" style="left:450px;top:144px;width:175px;height:0.8px;background:#333;"></div>
<div class="a" style="left:485px;top:145px;width:1px;height:39px;background:#303030;"></div>
<div class="a" style="left:520px;top:145px;width:1px;height:39px;background:#303030;"></div>
<div class="a" style="left:555px;top:145px;width:1px;height:39px;background:#303030;"></div>
<div class="a" style="left:590px;top:145px;width:1px;height:39px;background:#303030;"></div>
<div class="a" style="left:450px;top:166px;width:175px;height:1px;background:#303030;"></div>
<div class="a" style="left:450px;top:185px;width:175px;height:0.8px;background:#333;"></div>
<div class="t" style="left:455px;top:152.1px;font-size:8.8px;color:#dcdcdc;transform:scaleX(0.774);">ISO 100</div>
<div class="t" style="left:492.3px;top:152.1px;font-size:8.8px;color:#dcdcdc;transform:scaleX(0.857);">&#402;/11.0</div>
<div class="t" style="left:527px;top:152.1px;font-size:8.8px;color:#dcdcdc;transform:scaleX(0.831);">1/200 s</div>
<div class="t" style="left:564.7px;top:152.1px;font-size:8.8px;color:#dcdcdc;transform:scaleX(0.713);">0 EV</div>
<div class="t" style="left:593px;top:152.1px;font-size:8.8px;color:#dcdcdc;transform:scaleX(0.849);">100 mm</div>
<div class="t" style="left:464.2px;top:172.5px;font-size:8.8px;color:#dcdcdc;transform:scaleX(0.955);">M</div>
<svg style="left:495px;top:170.5px" width="14" height="13" viewBox="0 0 14 13"><rect x="0.6" y="0.6" width="12.8" height="11.8" rx="1.5" fill="none" stroke="#ddd" stroke-width="1.1"/><circle cx="7" cy="6.5" r="2.6" fill="none" stroke="#ddd" stroke-width="1.1"/><circle cx="7" cy="6.5" r="0.9" fill="#ddd"/><path d="M3 3h1.5M9.5 3H11M3 10h1.5M9.5 10H11" stroke="#ddd"/></svg>
<svg style="left:532px;top:169.5px" width="11" height="14" viewBox="0 0 11 14"><path d="M6.5 0.5L3 7H6L4.5 13.5L9 5.5H6Z" fill="none" stroke="#ddd" stroke-width="1"/><path d="M0.5 2L10.5 12" stroke="#ddd" stroke-width="1"/></svg>
<div class="t" style="left:563.7px;top:172.5px;font-size:8.8px;color:#dcdcdc;transform:scaleX(0.839);">RGB</div>
<svg style="left:602px;top:170.5px" width="9" height="13" viewBox="0 0 9 13"><path d="M4.5 0.5A4 4 0 0 1 8.5 4.5C8.5 7 4.5 10 4.5 10S0.5 7 0.5 4.5A4 4 0 0 1 4.5 0.5Z" fill="#555"/><circle cx="4.5" cy="4.5" r="1.5" fill="#363636"/><path d="M1 12.5h7" stroke="#555"/></svg>
<div class="t" style="left:448px;top:195.2px;font-size:8.8px;color:#dcdcdc;transform:scaleX(0.791);">Canon EOS-1Ds Mark III</div>
<div class="t" style="left:589px;top:195.2px;font-size:8.8px;color:#dcdcdc;transform:scaleX(0.804);">5616x3744</div>
<div class="t" style="left:448px;top:207.2px;font-size:8.8px;color:#dcdcdc;transform:scaleX(0.808);">Canon EF70-200mm f/4L IS USM</div>
<div class="t" style="left:596px;top:207.2px;font-size:8.8px;color:#dcdcdc;transform:scaleX(0.857);">8,48 МБ</div>
<svg style="left:445px;top:224px" width="5" height="4"><path d="M0 0h5l-2.5 3.5z" fill="#ddd"/></svg>
<div class="t" style="left:454px;top:222.7px;font-size:8.6px;color:#e8e8e8;transform:scaleX(0.852);font-weight:bold;">More</div>
<div class="t" style="left:448px;top:237.5px;font-size:8.8px;color:#d4d4d4;transform:scaleX(0.806);">Rating</div>
<div class="t" style="left:448px;top:250.8px;font-size:8.8px;color:#d4d4d4;transform:scaleX(0.823);">Shot date</div>
<div class="t" style="left:448px;top:263.8px;font-size:8.8px;color:#d4d4d4;transform:scaleX(0.834);">White balance</div>
<div class="t" style="left:448px;top:276.8px;font-size:8.8px;color:#d4d4d4;transform:scaleX(0.854);">Body Manufacturer</div>
<div class="t" style="left:448px;top:290.2px;font-size:8.8px;color:#d4d4d4;transform:scaleX(0.829);">Author</div>
<div class="t" style="left:448px;top:303.3px;font-size:8.8px;color:#d4d4d4;transform:scaleX(0.876);">Copyright</div>
<div class="t" style="left:448px;top:316.40000000000003px;font-size:8.8px;color:#d4d4d4;transform:scaleX(0.815);">Keywords</div>
<svg style="left:518.0px;top:236.5px" width="10" height="10" viewBox="0 0 10 10"><path d="M5 0.6L6.2 3.8L9.6 3.9L6.9 6L7.9 9.4L5 7.4L2.1 9.4L3.1 6L0.4 3.9L3.8 3.8Z" fill="none" stroke="#999" stroke-width="0.8"/></svg>
<svg style="left:529.3px;top:236.5px" width="10" height="10" viewBox="0 0 10 10"><path d="M5 0.6L6.2 3.8L9.6 3.9L6.9 6L7.9 9.4L5 7.4L2.1 9.4L3.1 6L0.4 3.9L3.8 3.8Z" fill="none" stroke="#999" stroke-width="0.8"/></svg>
<svg style="left:540.6px;top:236.5px" width="10" height="10" viewBox="0 0 10 10"><path d="M5 0.6L6.2 3.8L9.6 3.9L6.9 6L7.9 9.4L5 7.4L2.1 9.4L3.1 6L0.4 3.9L3.8 3.8Z" fill="none" stroke="#999" stroke-width="0.8"/></svg>
<svg style="left:551.9px;top:236.5px" width="10" height="10" viewBox="0 0 10 10"><path d="M5 0.6L6.2 3.8L9.6 3.9L6.9 6L7.9 9.4L5 7.4L2.1 9.4L3.1 6L0.4 3.9L3.8 3.8Z" fill="none" stroke="#999" stroke-width="0.8"/></svg>
<svg style="left:563.2px;top:236.5px" width="10" height="10" viewBox="0 0 10 10"><path d="M5 0.6L6.2 3.8L9.6 3.9L6.9 6L7.9 9.4L5 7.4L2.1 9.4L3.1 6L0.4 3.9L3.8 3.8Z" fill="none" stroke="#999" stroke-width="0.8"/></svg>
<div class="t" style="left:518px;top:250.8px;font-size:8.8px;color:#d8d8d8;transform:scaleX(0.816);">Mon, Aug 4, 2008 1:45 PM</div>
<svg style="left:609px;top:250px" width="9" height="9" viewBox="0 0 9 9"><path d="M1 8L1.5 6L6.5 1L8 2.5L3 7.5Z" fill="none" stroke="#ccc" stroke-width="0.9"/></svg>
<div class="t" style="left:518px;top:263.8px;font-size:8.8px;color:#d8d8d8;transform:scaleX(0.79);">Flash</div>
<div class="t" style="left:518px;top:276.8px;font-size:8.8px;color:#d8d8d8;transform:scaleX(0.81);">Canon</div>
<div class="a" style="left:518px;top:294.4px;width:7px;height:0.9px;background:#aaa;"></div>
<div class="a" style="left:518px;top:307.5px;width:7px;height:0.9px;background:#aaa;"></div>
<div class="a" style="left:518px;top:320.6px;width:7px;height:0.9px;background:#aaa;"></div>
<div class="t" style="left:448px;top:346.40000000000003px;font-size:8.8px;color:#d4d4d4;transform:scaleX(0.911);">GPS latitude</div>
<div class="a" style="left:517.5px;top:343px;width:106px;height:13px;background:#474747;"></div>
<div class="t" style="left:448px;top:361.1px;font-size:8.8px;color:#d4d4d4;transform:scaleX(0.899);">GPS longitude</div>
<div class="a" style="left:517.5px;top:358px;width:106px;height:13px;background:#474747;"></div>
<div class="t" style="left:448px;top:375.8px;font-size:8.8px;color:#d4d4d4;transform:scaleX(0.891);">GPS altitude</div>
<div class="a" style="left:517.5px;top:373px;width:106px;height:13px;background:#474747;"></div>
<div class="a" style="left:440px;top:391px;width:187px;height:6px;background:#333;"></div>
<div class="a" style="left:440px;top:397px;width:187px;height:11px;background:#1c1c1c;"></div>
<div class="t" style="left:447px;top:397.8px;font-size:8.7px;color:#dcdcdc;transform:scaleX(0.807);">IPTC</div>
<svg style="left:445px;top:416px" width="5" height="4"><path d="M0 0h5l-2.5 3.5z" fill="#ddd"/></svg>
<div class="t" style="left:454px;top:414.5px;font-size:8.6px;color:#e8e8e8;transform:scaleX(0.81);font-weight:bold;">IPTC - Contact</div>
<div class="t" style="left:454px;top:429.8px;font-size:8.8px;color:#d4d4d4;transform:scaleX(0.886);">Creator</div>
<div class="a" style="left:519.5px;top:427px;width:104px;height:13px;background:#474747;"></div>
<div class="t" style="left:454px;top:444.8px;font-size:8.8px;color:#d4d4d4;transform:scaleX(0.867);">Creator's job title</div>
<div class="a" style="left:519.5px;top:442px;width:104px;height:13px;background:#474747;"></div>
<div class="t" style="left:454px;top:459.8px;font-size:8.8px;color:#d4d4d4;transform:scaleX(0.867);">Address</div>
<div class="a" style="left:519.5px;top:457px;width:104px;height:13px;background:#474747;"></div>
<div class="t" style="left:454px;top:474.3px;font-size:8.8px;color:#d4d4d4;transform:scaleX(0.924);">City</div>
<div class="a" style="left:519.5px;top:472px;width:104px;height:13px;background:#474747;"></div>
<div class="a" style="left:440px;top:477px;width:188px;height:3px;background:#333;"></div>
<div class="a" style="left:628px;top:37px;width:10px;height:443px;background:#353535;"></div>
<div class="a" style="left:629px;top:48px;width:8px;height:224px;background:#404040;"></div>
<svg style="left:630px;top:41px" width="6" height="4"><path d="M0 3.5L3 0L6 3.5z" fill="#505050"/></svg>
<svg style="left:630px;top:470px" width="6" height="4"><path d="M0 0L3 3.5L6 0z" fill="#505050"/></svg>
<div class="a" style="left:632.5px;top:162px;width:2px;height:2px;background:#e0e0e0;"></div>
<div class="a" style="left:632.5px;top:166px;width:2px;height:2px;background:#e0e0e0;"></div>
<div class="a" style="left:638px;top:37px;width:2px;height:443px;background:#1e1e1e;"></div>
</body></html>
